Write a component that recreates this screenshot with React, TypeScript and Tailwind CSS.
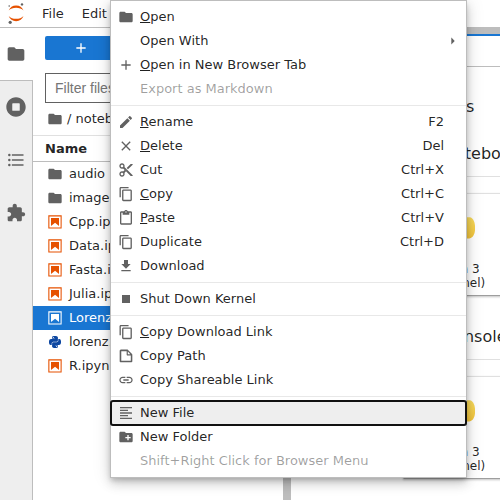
import React from 'react';
import { SiPython } from 'react-icons/si';

const FOLDER =
  'M10 4H4c-1.1 0-1.99.9-1.99 2L2 18c0 1.1.9 2 2 2h16c1.1 0 2-.9 2-2V8c0-1.1-.9-2-2-2h-8l-2-2z';
const ADD = 'M19 13h-6v6h-2v-6H5v-2h6V5h2v6h6v2z';
const EDIT =
  'M3 17.25V21h3.75L17.81 9.94l-3.75-3.75L3 17.25zM20.71 7.04c.39-.39.39-1.02 0-1.41l-2.34-2.34c-.39-.39-1.02-.39-1.41 0l-1.83 1.83 3.75 3.75 1.83-1.83z';
const CLOSE =
  'M19 6.41L17.59 5 12 10.59 6.41 5 5 6.41 10.59 12 5 17.59 6.41 19 12 13.41 17.59 19 19 17.59 13.41 12z';
const CUT =
  'M9.64 7.64c.23-.5.36-1.05.36-1.64 0-2.21-1.79-4-4-4S2 3.79 2 6s1.79 4 4 4c.59 0 1.14-.13 1.64-.36L10 12l-2.36 2.36C7.14 14.13 6.59 14 6 14c-2.21 0-4 1.79-4 4s1.79 4 4 4 4-1.79 4-4c0-.59-.13-1.14-.36-1.64L12 14l7 7h3v-1L9.64 7.64zM6 8c-1.1 0-2-.89-2-2s.9-2 2-2 2 .89 2 2-.9 2-2 2zm0 12c-1.1 0-2-.89-2-2s.9-2 2-2 2 .89 2 2-.9 2-2 2zm6-7.5c-.28 0-.5-.22-.5-.5s.22-.5.5-.5.5.22.5.5-.22.5-.5.5zM19 3l-6 6 2 2 7-7V3z';
const COPY =
  'M11.9,1H3.2C2.4,1,1.7,1.7,1.7,2.5v10.2h1.5V2.5h8.7V1z M14.1,3.9h-8c-0.8,0-1.5,0.7-1.5,1.5v10.2c0,0.8,0.7,1.5,1.5,1.5h8c0.8,0,1.5-0.7,1.5-1.5V5.4C15.5,4.6,14.9,3.9,14.1,3.9z M14.1,15.5h-8V5.4h8V15.5z';
const PASTE =
  'M19 2h-4.18C14.4.84 13.3 0 12 0c-1.3 0-2.4.84-2.82 2H5c-1.1 0-2 .9-2 2v16c0 1.1.9 2 2 2h14c1.1 0 2-.9 2-2V4c0-1.1-.9-2-2-2zm-7 0c.55 0 1 .45 1 1s-.45 1-1 1-1-.45-1-1 .45-1 1-1zm7 18H5V4h2v3h10V4h2v16z';
const DOWNLOAD = 'M19 9h-4V3H9v6H5l7 7 7-7zM5 18v2h14v-2H5z';
const STOP = 'M6 6h12v12H6z';
const FILE =
  'M19.3 8.2l-5.5-5.5c-.3-.3-.7-.5-1.2-.5H3.9c-.8.1-1.6.9-1.6 1.8v14.1c0 .9.7 1.6 1.6 1.6h14.2c.9 0 1.6-.7 1.6-1.6V9.4c.1-.5-.1-.9-.4-1.2zm-5.8-3.3l3.4 3.6h-3.4V4.9zm3.9 12.7H4.7c-.1 0-.2 0-.2-.2V4.7c0-.2.1-.3.2-.3h7.2v4.4s0 .8.3 1.1c.3.3 1.1.3 1.1.3h4.3v7.2s-.1.2-.2.2z';
const LINK =
  'M3.9 12c0-1.71 1.39-3.1 3.1-3.1h4V7H7c-2.76 0-5 2.24-5 5s2.24 5 5 5h4v-1.9H7c-1.71 0-3.1-1.39-3.1-3.1zM8 13h8v-2H8v2zm9-6h-4v1.9h4c1.71 0 3.1 1.39 3.1 3.1s-1.39 3.1-3.1 3.1h-4V17h4c2.76 0 5-2.24 5-5s-2.24-5-5-5z';
const TEXT = 'M15 15H3v2h12v-2zm0-8H3v2h12V7zM3 13h18v-2H3v2zm0 8h18v-2H3v2zM3 3v2h18V3H3z';
const NEW_FOLDER =
  'M20 6h-8l-2-2H4c-1.11 0-1.99.89-1.99 2L2 18c0 1.11.89 2 2 2h16c1.11 0 2-.89 2-2V8c0-1.11-.89-2-2-2zm-1 8h-3v3h-2v-3h-3v-2h3V9h2v3h3v2z';
const RUNNING =
  'M256 8C119 8 8 119 8 256s111 248 248 248 248-111 248-248S393 8 256 8zm96 328c0 8.8-7.2 16-16 16H176c-8.8 0-16-7.2-16-16V176c0-8.8 7.2-16 16-16h160c8.8 0 16 7.2 16 16v160z';
const TOC =
  'M7,5H21V7H7V5M7,13V11H21V13H7M4,4.5A1.5,1.5 0 0,1 5.5,6A1.5,1.5 0 0,1 4,7.5A1.5,1.5 0 0,1 2.5,6A1.5,1.5 0 0,1 4,4.5M4,10.5A1.5,1.5 0 0,1 5.5,12A1.5,1.5 0 0,1 4,13.5A1.5,1.5 0 0,1 2.5,12A1.5,1.5 0 0,1 4,10.5M7,19V17H21V19H7M4,16.5A1.5,1.5 0 0,1 5.5,18A1.5,1.5 0 0,1 4,19.5A1.5,1.5 0 0,1 2.5,18A1.5,1.5 0 0,1 4,16.5Z';
const EXTENSION =
  'M20.5 11H19V7c0-1.1-.9-2-2-2h-4V3.5C13 2.12 11.88 1 10.5 1S8 2.12 8 3.5V5H4c-1.1 0-1.99.9-1.99 2v3.8H3.5c1.49 0 2.7 1.21 2.7 2.7s-1.21 2.7-2.7 2.7H2V20c0 1.1.9 2 2 2h3.8v-1.5c0-1.49 1.21-2.7 2.7-2.7 1.49 0 2.7 1.21 2.7 2.7V22H17c1.1 0 2-.9 2-2v-4h1.5c1.38 0 2.5-1.12 2.5-2.5S21.88 11 20.5 11z';
const CARET = 'M7.2,5.2L10.9,9l-3.8,3.8V5.2H7.2z';

function Icon({ d, box = 24, className = 'size-4' }: { d: string; box?: number; className?: string }) {
  return (
    <svg viewBox={`0 0 ${box} ${box}`} className={`shrink-0 fill-current ${className}`} aria-hidden="true">
      <path d={d} />
    </svg>
  );
}

function JupyterLogo() {
  return (
    <svg viewBox="0 0 32 28" className="h-7 w-8 shrink-0" aria-hidden="true">
      <path d="M8.7 10.6a7.9 7.9 0 0 1 14.8 0c-3.3-3.8-11.5-3.8-14.8 0z" fill="#e65100" />
      <path d="M8.7 16a7.9 7.9 0 0 0 14.8 0c-3.3 3.8-11.5 3.8-14.8 0z" fill="#e65100" />
      <circle cx="22" cy="4.4" r="1.2" fill="#616161" />
      <circle cx="10.2" cy="22.3" r="1.6" fill="#616161" />
      <circle cx="9.2" cy="6" r="0.8" fill="#616161" />
    </svg>
  );
}

function NotebookIcon({ selected = false }: { selected?: boolean }) {
  return (
    <svg
      viewBox="0 0 22 22"
      className={`size-4 shrink-0 ${selected ? 'fill-white' : 'fill-[#e65100]'}`}
      aria-hidden="true"
    >
      <path d="M18.7 3.3v15.4H3.3V3.3h15.4m1.5-1.5H1.8v18.3h18.3l.1-18.3z" />
      <path d="M16.5 16.5l-5.4-4.3-5.6 4.3v-11h11z" />
    </svg>
  );
}

function PythonLogo() {
  return (
    <svg viewBox="0 0 24 24" className="size-11 shrink-0" aria-hidden="true">
      <defs>
        <linearGradient id="py-yellow" x1="0" y1="0" x2="0" y2="1">
          <stop offset="0" stopColor="#f7da5c" />
          <stop offset="1" stopColor="#f0b82a" />
        </linearGradient>
      </defs>
      <path
        fill="#3776ab"
        d="M14.25.18l.9.2.73.26.59.3.45.32.34.34.25.34.16.33.1.3.04.26.02.2-.01.13V8.5l-.05.63-.13.55-.21.46-.26.38-.3.31-.33.25-.35.19-.35.14-.33.1-.3.07-.26.04-.21.02H8.77l-.69.05-.59.14-.5.22-.41.27-.33.32-.27.35-.2.36-.15.37-.1.35-.07.32-.04.27-.02.21v3.06H3.17l-.21-.03-.28-.07-.32-.12-.35-.18-.36-.26-.36-.36-.35-.46-.32-.59-.28-.73-.21-.88-.14-1.05-.05-1.23.06-1.22.16-1.04.24-.87.32-.71.36-.57.4-.44.42-.33.42-.24.4-.16.36-.1.32-.05.24-.01h.16l.06.01h8.16v-.83H6.18l-.01-2.75-.02-.37.05-.34.11-.31.17-.28.25-.26.31-.23.38-.2.44-.18.51-.15.58-.12.64-.1.71-.06.77-.04.84-.02 1.27.05z"
      />
      <path
        fill="url(#py-yellow)"
        d="M21.04 6.11l.28.06.32.12.35.18.36.27.36.35.35.47.32.59.28.73.21.88.14 1.04.05 1.23-.06 1.23-.16 1.04-.24.86-.32.71-.36.57-.4.45-.42.33-.42.24-.4.16-.36.09-.32.05-.24.02-.16-.01h-8.22v.82h5.84l.01 2.76.02.36-.05.34-.11.31-.17.29-.25.25-.31.24-.38.2-.44.17-.51.15-.58.13-.64.09-.71.07-.77.04-.84.01-1.27-.04-1.07-.14-.9-.2-.73-.25-.59-.3-.45-.33-.34-.34-.25-.34-.16-.33-.1-.3-.04-.25-.02-.2.01-.13v-5.34l.05-.64.13-.54.21-.46.26-.38.3-.32.33-.24.35-.2.35-.14.33-.1.3-.06.26-.04.21-.02.13-.01h5.84l.69-.05.59-.14.5-.21.41-.28.33-.32.27-.35.2-.36.15-.36.1-.35.07-.32.04-.28.02-.21V6.07h2.09l.14.01z"
      />
    </svg>
  );
}

type Entry = {
  label: string;
  icon?: string;
  box?: number;
  keys?: string;
  mnemonic?: boolean;
  disabled?: boolean;
  submenu?: boolean;
  active?: boolean;
};

const groups: Entry[][] = [
  [
    { label: 'Open', icon: FOLDER, mnemonic: true },
    { label: 'Open With', submenu: true },
    { label: 'Open in New Browser Tab', icon: ADD, mnemonic: true },
    { label: 'Export as Markdown', disabled: true },
  ],
  [
    { label: 'Rename', icon: EDIT, keys: 'F2', mnemonic: true },
    { label: 'Delete', icon: CLOSE, keys: 'Del', mnemonic: true },
    { label: 'Cut', icon: CUT, keys: 'Ctrl+X' },
    { label: 'Copy', icon: COPY, box: 18, keys: 'Ctrl+C', mnemonic: true },
    { label: 'Paste', icon: PASTE, keys: 'Ctrl+V', mnemonic: true },
    { label: 'Duplicate', icon: COPY, box: 18, keys: 'Ctrl+D' },
    { label: 'Download', icon: DOWNLOAD },
  ],
  [{ label: 'Shut Down Kernel', icon: STOP }],
  [
    { label: 'Copy Download Link', icon: COPY, box: 18, mnemonic: true },
    { label: 'Copy Path', icon: FILE, box: 22 },
    { label: 'Copy Shareable Link', icon: LINK },
  ],
  [
    { label: 'New File', icon: TEXT, active: true },
    { label: 'New Folder', icon: NEW_FOLDER },
    { label: 'Shift+Right Click for Browser Menu', disabled: true },
  ],
];

function MenuItem({ item }: { item: Entry }) {
  return (
    <button
      type="button"
      role="menuitem"
      disabled={item.disabled}
      className={`flex h-6 w-full items-center pr-[5px] pl-[7px] text-left whitespace-nowrap ${
        item.active ? 'rounded-xs bg-[#eeeeee] outline-2 -outline-offset-1 outline-[#111111]' : ''
      } ${item.disabled ? 'text-black/38' : ''}`}
    >
      <span className="mr-1.5 size-4 text-[#616161]">
        {item.icon && <Icon d={item.icon} box={item.box} />}
      </span>
      <span className="flex-1">
        {item.mnemonic ? (
          <>
            <span className="underline">{item.label[0]}</span>
            {item.label.slice(1)}
          </>
        ) : (
          item.label
        )}
      </span>
      <span className="pr-px">{item.keys}</span>
      <span className="size-4 text-[#616161]">{item.submenu && <Icon d={CARET} box={18} />}</span>
    </button>
  );
}

function ContextMenu() {
  return (
    <div
      role="menu"
      className="absolute top-0 left-[110px] w-[357px] border border-[#bdbdbd] bg-white py-1 shadow-[0_3px_5px_-1px_rgba(0,0,0,0.2),0_6px_10px_0_rgba(0,0,0,0.14),0_1px_18px_0_rgba(0,0,0,0.12)]"
    >
      {groups.map((group, i) => (
        <React.Fragment key={i}>
          {i > 0 && <div role="separator" className="my-1 h-px bg-[#e8e8e8]" />}
          {group.map((item) => (
            <MenuItem key={item.label} item={item} />
          ))}
        </React.Fragment>
      ))}
    </div>
  );
}

const files = [
  { name: 'audio', kind: 'folder' },
  { name: 'images', kind: 'folder' },
  { name: 'Cpp.ipynb', kind: 'notebook' },
  { name: 'Data.ipynb', kind: 'notebook' },
  { name: 'Fasta.ipynb', kind: 'notebook' },
  { name: 'Julia.ipynb', kind: 'notebook' },
  { name: 'Lorenz.ipynb', kind: 'notebook', selected: true },
  { name: 'lorenz.py', kind: 'python' },
  { name: 'R.ipynb', kind: 'notebook' },
];

function FileBrowser() {
  return (
    <section className="flex w-[250px] shrink-0 flex-col bg-white pt-2">
      <div className="px-3">
        <button
          type="button"
          aria-label="New Launcher"
          className="flex h-6 w-[72px] items-center justify-center rounded-xs bg-[#1976d2] text-white"
        >
          <Icon d={ADD} />
        </button>
        <input
          type="text"
          aria-label="Filter files by name"
          placeholder="Filter files by name"
          className="mt-[13px] block h-[30px] w-full border border-[#616161] bg-white px-[9px] font-['Liberation_Sans',Arial,sans-serif] text-sm placeholder:text-[#757575]"
        />
      </div>
      <nav className="flex h-8 items-center gap-1 px-3.5 text-[#616161]">
        <Icon d={FOLDER} />
        <a href="#notebooks" className="text-black/87">
          / notebooks /
        </a>
      </nav>
      <table className="w-full border-collapse">
        <thead>
          <tr className="h-[26px] border-t border-b border-t-[#e0e0e0] border-b-[#bdbdbd]">
            <th className="p-0 pl-3 text-left font-bold">Name</th>
          </tr>
        </thead>
        <tbody>
          {files.map((f) => (
            <tr key={f.name} className={f.selected ? 'h-6 bg-[#1976d2] text-white' : 'h-6'}>
              <td className="p-0">
                <span className="flex items-center gap-1.5 pl-3.5">
                  {f.kind === 'folder' && <Icon d={FOLDER} className="size-4 text-[#616161]" />}
                  {f.kind === 'notebook' && <NotebookIcon selected={f.selected} />}
                  {f.kind === 'python' && <SiPython className="size-4 p-0.5 text-[#0d47a1]" />}
                  {f.name}
                </span>
              </td>
            </tr>
          ))}
        </tbody>
      </table>
    </section>
  );
}

function LauncherSection({ title }: { title: string }) {
  return (
    <section className="h-[183px]">
      <h2 className="flex h-[45px] items-center border-b border-[#e0e0e0] pl-10 text-base">{title}</h2>
      <button
        type="button"
        className="mt-4 flex h-[103px] w-[100px] flex-col items-center border border-[#e0e0e0] border-b-[#9e9e9e] bg-white pt-3 text-xs leading-[14px] shadow-[0_1px_2px_rgba(0,0,0,0.24)]"
      >
        <PythonLogo />
        <span className="mt-3">
          Python 3
          <br />
          (ipykernel)
        </span>
      </button>
    </section>
  );
}

export default function App() {
  return (
    <div className="relative flex h-screen flex-col overflow-hidden bg-white font-['DejaVu_Sans',Verdana,sans-serif] text-[13px] leading-4 text-black/87">
      <header className="flex h-7 shrink-0 items-center border-b border-[#bdbdbd] bg-white">
        <JupyterLogo />
        <button type="button" className="px-2.5">
          File
        </button>
        <button type="button" className="px-2">
          Edit
        </button>
      </header>
      <div className="flex min-h-0 flex-1">
        <aside className="flex w-[33px] shrink-0 flex-col text-[#616161]">
          <button type="button" aria-label="File Browser" className="flex h-[52px] items-center pl-1.5">
            <Icon d={FOLDER} className="size-5" />
          </button>
          <div className="flex-1 border-t border-r border-[#bdbdbd] bg-[#eeeeee]">
            <button type="button" aria-label="Running Kernels" className="flex h-[53px] items-center pb-0.5 pl-1.5">
              <Icon d={RUNNING} box={512} className="size-5" />
            </button>
            <button type="button" aria-label="Table of Contents" className="flex h-[53px] items-center pb-0.5 pl-1.5">
              <Icon d={TOC} className="size-5" />
            </button>
            <button type="button" aria-label="Extensions" className="flex h-[53px] items-center pb-0.5 pl-1.5">
              <Icon d={EXTENSION} className="size-5" />
            </button>
          </div>
        </aside>
        <FileBrowser />
        <main className="flex min-w-0 flex-1 flex-col bg-[#bdbdbd] pt-1.5 pl-2">
          <div className="h-[33px] shrink-0 border-t-2 border-b border-t-[#1976d2] border-b-[#bdbdbd] bg-white" />
          <div className="flex-1 overflow-hidden bg-white pt-7 pl-28">
            <h1 className="-ml-3 h-[37px] text-base">notebooks</h1>
            <LauncherSection title="Notebook" />
            <LauncherSection title="Console" />
          </div>
        </main>
      </div>
      <ContextMenu />
    </div>
  );
}
